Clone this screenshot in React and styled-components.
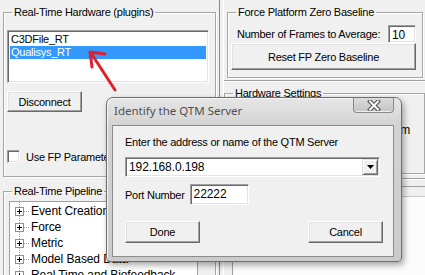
import React from 'react'
import styled, { createGlobalStyle } from 'styled-components'

const GlobalStyle = createGlobalStyle`
  body {
    margin: 0;
    background: #f0f0f0;
  }
`

const pipeline = [
  'Event Creation',
  'Force',
  'Metric',
  'Model Based Data',
  'Real Time and Biofeedback',
]

const plugins = ['C3DFile_RT', 'Qualisys_RT']

function App() {
  return (
    <>
      <GlobalStyle />
      <Screen>
        <LeftColumn>
          <GroupBox $height={171}>
            <Legend>Real-Time Hardware (plugins)</Legend>
            <ListBox>
              {plugins.map((name, i) => (
                <ListItem key={name} $selected={i === 1}>{name}</ListItem>
              ))}
            </ListBox>
            <Button $width={75} $height={21} style={{ marginTop: 8 }}>Disconnect</Button>
            <CheckRow>
              <CheckBox />
              <span>Use FP Parameters</span>
            </CheckRow>
          </GroupBox>
          <GroupBox $height={120} $top={8}>
            <Legend>Real-Time Pipeline</Legend>
            <Tree>
              {pipeline.map((item) => (
                <TreeRow key={item}>
                  <Expander />
                  <TreeDots />
                  <span>{item}</span>
                </TreeRow>
              ))}
            </Tree>
          </GroupBox>
        </LeftColumn>

        <Splitter />

        <RightColumn>
          <GroupBox $height={72} $right={2} $left={3}>
            <Legend>Force Platform Zero Baseline</Legend>
            <FieldRow>
              <span>Number of Frames to Average:</span>
              <TextBox $width={28} $height={18}>10</TextBox>
            </FieldRow>
            <Button $height={27} $full>Reset FP Zero Baseline</Button>
          </GroupBox>
          <Rule />
          <GroupBox $height={87} $top={5} $left={0} $right={0}>
            <Legend>Hardware Settings</Legend>
            <SettingLabel>Use QTM Platform</SettingLabel>
          </GroupBox>
          <Strip />
          <WhitePanel />
        </RightColumn>

        <Arrow width="45" height="55" viewBox="0 0 45 55">
          <path d="M34 44 L10 7" />
          <path d="M24 8 L9 6 L11 21" />
        </Arrow>

        <Dialog>
          <TitleBar>
            <Title>Identify the QTM Server</Title>
            <CloseButton>
              <svg width="18" height="11" viewBox="0 0 18 11">
                <path d="M5 1.5 L13 9.5 M13 1.5 L5 9.5" stroke="#4a4a4a" strokeWidth="4" strokeLinecap="square" />
                <path d="M5 1.5 L13 9.5 M13 1.5 L5 9.5" stroke="#ffffff" strokeWidth="2" strokeLinecap="square" />
              </svg>
            </CloseButton>
          </TitleBar>
          <Client>
            <span>Enter the address or name of the QTM Server</span>
            <Combo>
              <ComboText>192.168.0.198</ComboText>
              <ComboButton>
                <svg width="7" height="4" viewBox="0 0 7 4">
                  <path d="M0 0 H7 L3.5 4 Z" fill="#000" />
                </svg>
              </ComboButton>
            </Combo>
            <PortRow>
              <span>Port Number</span>
              <TextBox $width={59} $height={21}>22222</TextBox>
            </PortRow>
            <ButtonRow>
              <Button $width={75} $height={22}>Done</Button>
              <Button $width={75} $height={22}>Cancel</Button>
            </ButtonRow>
          </Client>
        </Dialog>
      </Screen>
    </>
  )
}

const Screen = styled.div`
  position: relative;
  width: 425px;
  height: 275px;
  overflow: hidden;
  display: flex;
  background: #f0f0f0;
  font-family: "Liberation Sans", Arial, sans-serif;
  font-size: 11px;
  letter-spacing: -0.25px;
  color: #000;
`

const LeftColumn = styled.div`
  width: 219px;
  flex-shrink: 0;
  display: flex;
  flex-direction: column;
  padding-left: 3px;
  box-sizing: border-box;
`

const Splitter = styled.div`
  width: 3px;
  flex-shrink: 0;
  border-left: 1px solid #8a8a8a;
  border-right: 1px solid #ffffff;
`

const RightColumn = styled.div`
  flex: 1;
  display: flex;
  flex-direction: column;
  min-width: 0;
`

const GroupBox = styled.fieldset`
  margin: ${(p) => p.$top ?? 6}px ${(p) => p.$right ?? 3}px 0 ${(p) => p.$left ?? 0}px;
  padding: 0 6px 0 3px;
  height: ${(p) => p.$height}px;
  box-sizing: border-box;
  flex-shrink: 0;
  border: 1px solid #a6a6a6;
  box-shadow: inset 1px 1px 0 #ffffff, 1px 1px 0 #ffffff;
  display: flex;
  flex-direction: column;
  align-items: flex-start;
  min-width: 0;
`

const Legend = styled.legend`
  padding: 0 2px;
  margin-left: 5px;
  line-height: 13px;
  white-space: nowrap;
`

const ListBox = styled.div`
  margin-top: 11px;
  align-self: stretch;
  height: 53px;
  box-sizing: border-box;
  background: #fff;
  border-top: 1px solid #a0a0a0;
  border-left: 1px solid #a0a0a0;
  border-right: 1px solid #ffffff;
  border-bottom: 1px solid #ffffff;
  box-shadow: inset 1px 1px 0 #696969, inset -1px -1px 0 #e3e3e3;
  padding: 2px 2px 0 2px;
`

const ListItem = styled.div`
  height: 13px;
  line-height: 13px;
  padding-left: 1px;
  background: ${(p) => (p.$selected ? '#3399ff' : 'transparent')};
  color: ${(p) => (p.$selected ? '#fff' : '#000')};
`

const Button = styled.div`
  width: ${(p) => (p.$full ? 'auto' : `${p.$width}px`)};
  align-self: ${(p) => (p.$full ? 'stretch' : 'auto')};
  height: ${(p) => p.$height}px;
  box-sizing: border-box;
  display: flex;
  align-items: center;
  justify-content: center;
  background: #f0f0f0;
  border-top: 1px solid #ffffff;
  border-left: 1px solid #ffffff;
  border-right: 1px solid #696969;
  border-bottom: 1px solid #696969;
  box-shadow: inset -1px -1px 0 #a0a0a0, inset 1px 1px 0 #e3e3e3;
  flex-shrink: 0;
`

const CheckRow = styled.div`
  margin-top: 38px;
  display: flex;
  align-items: center;
  gap: 6px;
  white-space: nowrap;
`

const CheckBox = styled.div`
  width: 13px;
  height: 13px;
  box-sizing: border-box;
  background: #fff;
  border-top: 1px solid #a0a0a0;
  border-left: 1px solid #a0a0a0;
  border-right: 1px solid #ffffff;
  border-bottom: 1px solid #ffffff;
  box-shadow: inset 1px 1px 0 #696969, inset -1px -1px 0 #e3e3e3;
`

const Tree = styled.div`
  margin: 3px 0 0 2px;
  width: 189px;
  flex: 1;
  box-sizing: border-box;
  background: #fff;
  border-top: 1px solid #a0a0a0;
  border-left: 1px solid #a0a0a0;
  border-right: 1px solid #a0a0a0;
  padding: 1px 0 0 5px;
  font-size: 12px;
  letter-spacing: -0.1px;
  background-image: linear-gradient(#9a9a9a 50%, transparent 50%);
  background-size: 1px 2px;
  background-repeat: repeat-y;
  background-position: 9px 0;
`

const TreeRow = styled.div`
  height: 16px;
  display: flex;
  align-items: center;
  white-space: nowrap;
`

const Expander = styled.div`
  position: relative;
  width: 9px;
  height: 9px;
  box-sizing: border-box;
  border: 1px solid #919191;
  background: #fff;
  flex-shrink: 0;
  &::before {
    content: '';
    position: absolute;
    left: 1px;
    top: 3px;
    width: 5px;
    height: 1px;
    background: #000;
  }
  &::after {
    content: '';
    position: absolute;
    left: 3px;
    top: 1px;
    width: 1px;
    height: 5px;
    background: #000;
  }
`

const TreeDots = styled.div`
  width: 5px;
  height: 1px;
  margin: 0 2px 0 0;
  background-image: linear-gradient(90deg, #9a9a9a 50%, transparent 50%);
  background-size: 2px 1px;
`

const FieldRow = styled.div`
  align-self: stretch;
  display: flex;
  align-items: center;
  justify-content: space-between;
  margin-top: 6px;
  padding-left: 6px;
`

const TextBox = styled.div`
  width: ${(p) => p.$width}px;
  height: ${(p) => p.$height}px;
  box-sizing: border-box;
  background: #fff;
  border-top: 1px solid #a0a0a0;
  border-left: 1px solid #a0a0a0;
  border-right: 1px solid #ffffff;
  border-bottom: 1px solid #ffffff;
  box-shadow: inset 1px 1px 0 #696969, inset -1px -1px 0 #e3e3e3;
  padding: 2px 0 0 3px;
  font-size: 12px;
  letter-spacing: -0.1px;
`

const Rule = styled.div`
  margin-top: 2px;
  height: 0;
  border-top: 1px solid #a0a0a0;
  border-bottom: 1px solid #ffffff;
`

const SettingLabel = styled.div`
  margin-top: 23px;
  align-self: stretch;
  text-align: right;
  padding-right: 8px;
  font-size: 12px;
  white-space: nowrap;
`

const Strip = styled.div`
  margin-top: 4px;
  height: 7px;
  border-top: 1px solid #a0a0a0;
  border-bottom: 1px solid #a0a0a0;
  box-shadow: inset 0 1px 0 #fff;
`

const WhitePanel = styled.div`
  margin: 9px 0 0 8px;
  flex: 1;
  background: #fcfcfc;
  border-left: 1px solid #a0a0a0;
  border-top: 1px solid #c8c8c8;
`

const Arrow = styled.svg`
  position: absolute;
  left: 81px;
  top: 46px;
  fill: none;
  stroke: #e0202c;
  stroke-width: 3;
  stroke-linecap: round;
  stroke-linejoin: round;
`

const Dialog = styled.div`
  position: absolute;
  left: 106px;
  top: 97px;
  width: 296px;
  height: 165px;
  box-sizing: border-box;
  display: flex;
  flex-direction: column;
  border: 1px solid #6e6e6e;
  border-radius: 7px 7px 4px 4px;
  background: linear-gradient(#e6e6e6 0px, #d3d3d3 28px, #cbcbcb 100%);
  box-shadow: 2px 3px 6px rgba(0, 0, 0, 0.35), inset 1px 1px 0 #f4f4f4;
`

const TitleBar = styled.div`
  height: 27px;
  display: flex;
  align-items: flex-start;
  justify-content: space-between;
  padding: 0 7px 0 7px;
`

const Title = styled.div`
  margin-top: 5px;
  font-family: "Noto Sans", "Liberation Sans", sans-serif;
  font-size: 11.5px;
  letter-spacing: 0;
  color: #505050;
`

const CloseButton = styled.div`
  width: 41px;
  height: 15px;
  box-sizing: border-box;
  display: flex;
  align-items: center;
  justify-content: center;
  border: 1px solid #8a8a8a;
  border-top: none;
  border-radius: 0 0 4px 4px;
  background: linear-gradient(#dcdcdc, #c4c4c4);
  box-shadow: inset 0 -1px 0 #eeeeee;
`

const Client = styled.div`
  flex: 1;
  margin: 0 7px 4px 5px;
  border: 1px solid #8c8c8c;
  background: #f0f0f0;
  padding: 10px 10px 0 12px;
  display: flex;
  flex-direction: column;
  align-items: flex-start;
`

const Combo = styled.div`
  margin-top: 9px;
  width: 255px;
  height: 20px;
  box-sizing: border-box;
  display: flex;
  align-items: center;
  justify-content: space-between;
  background: #fff;
  border-top: 1px solid #a0a0a0;
  border-left: 1px solid #a0a0a0;
  border-right: 1px solid #ffffff;
  border-bottom: 1px solid #ffffff;
  box-shadow: inset 1px 1px 0 #696969, inset -1px -1px 0 #e3e3e3;
  padding: 0 1px 0 3px;
`

const ComboText = styled.span`
  font-size: 12px;
  letter-spacing: -0.1px;
`

const ComboButton = styled.div`
  width: 16px;
  height: 16px;
  box-sizing: border-box;
  display: flex;
  align-items: center;
  justify-content: center;
  background: #f0f0f0;
  border-top: 1px solid #e3e3e3;
  border-left: 1px solid #e3e3e3;
  border-right: 1px solid #696969;
  border-bottom: 1px solid #696969;
  box-shadow: inset 1px 1px 0 #ffffff, inset -1px -1px 0 #a0a0a0;
`

const PortRow = styled.div`
  margin-top: 7px;
  display: flex;
  align-items: center;
  gap: 5px;
`

const ButtonRow = styled.div`
  margin-top: 16px;
  align-self: stretch;
  display: flex;
  justify-content: space-between;
`

export default App
